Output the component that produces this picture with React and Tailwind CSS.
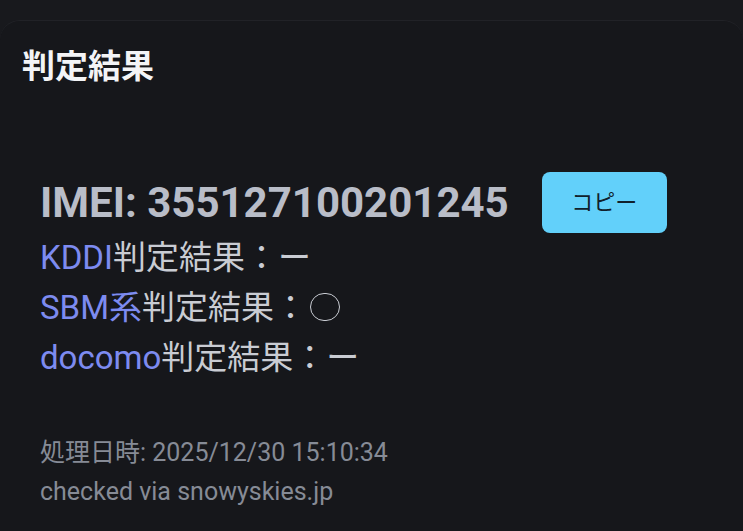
export default function App() {
    const link = "text-[#7d8bf0]";
    return (
        <div className="w-[743px] h-[531px] overflow-hidden bg-[#18191d] flex flex-col font-['Roboto','Noto_Sans_CJK_JP',sans-serif]">
            <div className="h-[20px] shrink-0" />
            <div className="flex-1 rounded-t-[20px] bg-[#16171b] border-t border-[#212227] px-[22px] pt-[26px]">
                <h2 className="text-[33px] leading-[40px] font-bold text-[#f3f4f6]">判定結果</h2>
                <div className="ml-[18px] mt-[85px]">
                    <div className="flex items-center h-[61px]">
                        <span className="text-[42px] font-bold text-[#b9bdc8]">IMEI: 355127100201245</span>
                        <button className="ml-[33px] w-[125px] h-[61px] rounded-[8px] bg-[#62d0fa] text-[#10202b] text-[22px]">
                            コピー
                        </button>
                    </div>
                    <div className="text-[33px] leading-[50px] text-[#c9ccd3]">
                        <p><span className={link}>KDDI</span>判定結果：ー</p>
                        <p>
                            <span className={link}>SBM系</span>判定結果：
                            <span className="inline-block w-[30px] h-[28px] ml-[3px] rounded-full border-[1.5px] border-[#c9ccd3] align-[-2px]" />
                        </p>
                        <p><span className={link}>docomo</span>判定結果：ー</p>
                    </div>
                    <div className="mt-[50px] text-[25px] leading-[39px] text-[#868b96]">
                        <p>処理日時: 2025/12/30 15:10:34</p>
                        <p>checked via snowyskies.jp</p>
                    </div>
                </div>
            </div>
        </div>
    );
}
